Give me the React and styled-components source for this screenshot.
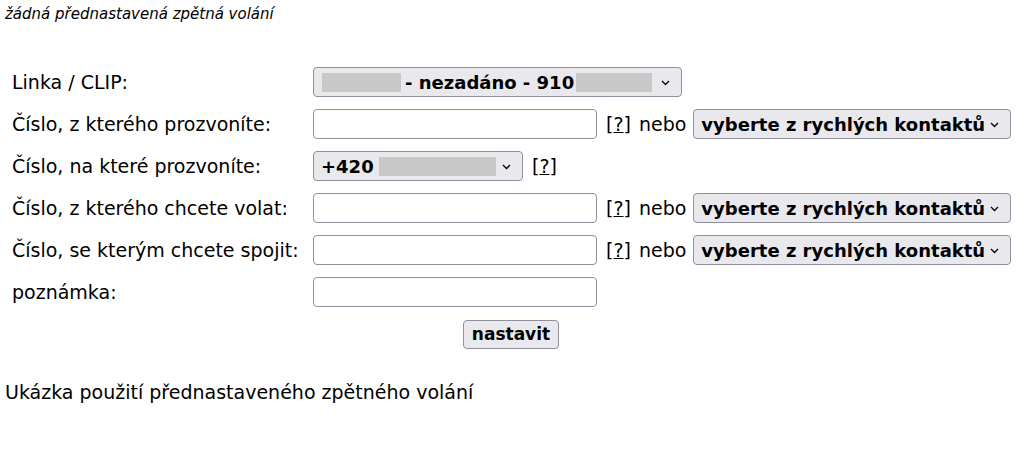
import React from 'react';
import styled, { createGlobalStyle } from 'styled-components';

const GlobalStyle = createGlobalStyle`
	body {
		margin: 0;
		background: #ffffff;
		color: #000000;
		font-family: 'DejaVu Sans', Verdana, sans-serif;
	}
`;

const Page = styled.div`
	width: 1022px;
	padding: 7px 5px 0 5px;
	box-sizing: border-box;
`;

const Status = styled.div`
	font-size: 15px;
	font-style: italic;
	height: 15px;
	line-height: 15px;
`;

const Form = styled.form`
	display: grid;
	grid-template-columns: 301px 1fr;
	grid-auto-rows: 30px;
	row-gap: 12px;
	align-items: center;
	margin-top: 45px;
	padding-left: 7px;
	font-size: 19px;
`;

const Label = styled.label`
	font-size: 19px;
	white-space: nowrap;
`;

const Field = styled.div`
	display: flex;
	align-items: center;
	height: 30px;
`;

const TextInput = styled.input`
	width: 284px;
	height: 30px;
	box-sizing: border-box;
	border: 1px solid #8f8f9d;
	border-radius: 4px;
	background: #ffffff;
	font-family: inherit;
	font-size: 16px;
	padding: 0 6px;
	outline: none;
`;

const SelectBox = styled.div`
	position: relative;
	display: flex;
	align-items: center;
	flex-shrink: 0;
	width: ${(props) => props.width}px;
	height: 30px;
	box-sizing: border-box;
	border: 1px solid #8f8f9d;
	border-radius: 4px;
	background: #e9e9ed;
	padding: 0 7px;
	font-weight: bold;
	font-size: 18px;
	white-space: nowrap;
	overflow: hidden;
`;

const Mask = styled.span`
	display: inline-block;
	flex-shrink: 0;
	width: ${(props) => props.width}px;
	height: 19px;
	background: #c8c8c8;
	margin: ${(props) => props.margin || '0'};
`;

const Chevron = styled.svg`
	position: absolute;
	right: 11px;
	top: 12px;
	background: #e9e9ed;
`;

const Help = styled.span`
	margin-left: 9px;
	font-size: 19px;
	white-space: nowrap;

	a {
		color: #000000;
		text-decoration: underline;
	}
`;

const Or = styled.span`
	margin: 0 7px 0 8px;
	font-size: 19px;
`;

const ButtonRow = styled.div`
	grid-column: 1 / -1;
	display: flex;
	justify-content: center;
	padding-right: 7px;
`;

const Submit = styled.button`
	width: 96px;
	height: 29px;
	border: 1px solid #8f8f9d;
	border-radius: 4px;
	background: #e9e9ed;
	font-family: inherit;
	font-weight: bold;
	font-size: 17px;
	color: #000000;
	padding: 0;
`;

const Example = styled.div`
	margin-top: 32px;
	font-size: 19px;
`;

const Arrow = () => (
	<Chevron width="9" height="6" viewBox="0 0 9 6">
		<path d="M1 1 L4.5 4.5 L8 1" fill="none" stroke="#000" strokeWidth="1.3" />
	</Chevron>
);

const HelpLink = () => (
	<Help>
		[<a href="#">?</a>]
	</Help>
);

const QuickContacts = () => (
	<>
		<HelpLink />
		<Or>nebo</Or>
		<SelectBox width={318}>
			vyberte z rychlých kontaktů
			<Arrow />
		</SelectBox>
	</>
);

const App = () => {
	return (
		<Page>
			<GlobalStyle />
			<Status>žádná přednastavená zpětná volání</Status>
			<Form onSubmit={(e) => e.preventDefault()}>
				<Label>Linka / CLIP:</Label>
				<Field>
					<SelectBox width={369}>
						<Mask width={79} margin="0 4px 0 1px" />
						- nezadáno - 910
						<Mask width={76} margin="0 0 0 2px" />
						<Arrow />
					</SelectBox>
				</Field>

				<Label>Číslo, z kterého prozvoníte:</Label>
				<Field>
					<TextInput type="text" />
					<QuickContacts />
				</Field>

				<Label>Číslo, na které prozvoníte:</Label>
				<Field>
					<SelectBox width={210}>
						+420
						<Mask width={117} margin="0 0 0 5px" />
						<Arrow />
					</SelectBox>
					<HelpLink />
				</Field>

				<Label>Číslo, z kterého chcete volat:</Label>
				<Field>
					<TextInput type="text" />
					<QuickContacts />
				</Field>

				<Label>Číslo, se kterým chcete spojit:</Label>
				<Field>
					<TextInput type="text" />
					<QuickContacts />
				</Field>

				<Label>poznámka:</Label>
				<Field>
					<TextInput type="text" />
				</Field>

				<ButtonRow>
					<Submit type="submit">nastavit</Submit>
				</ButtonRow>
			</Form>
			<Example>Ukázka použití přednastaveného zpětného volání</Example>
		</Page>
	);
};

export default App;
